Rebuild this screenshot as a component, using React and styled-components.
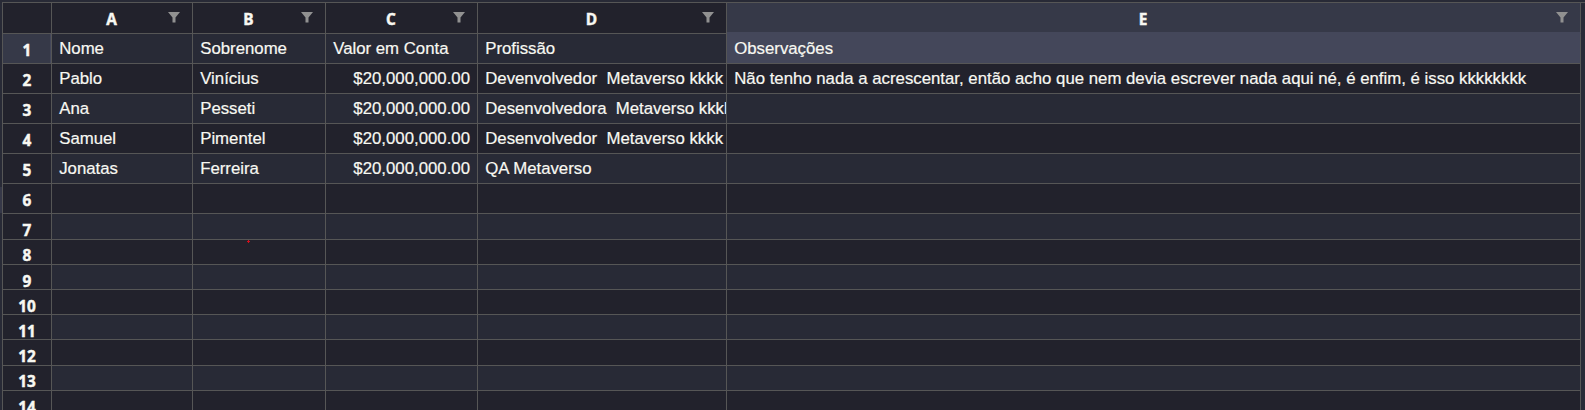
import React from "react";
import styled, { createGlobalStyle } from "styled-components";

const GlobalStyle = createGlobalStyle`
  * { box-sizing: border-box; }
  html, body { margin: 0; height: 100%; overflow: hidden; background: #282a36; }
`;

const LINE = "#565656";

const Screen = styled.div`
  position: relative;
  display: flex;
  width: 1585px;
  height: 410px;
  padding-top: 2px;
  overflow: hidden;
  background: #282a36;
  color: #f8f8f2;
`;

const LeftGutter = styled.div`
  width: 2px;
  flex: none;
  padding-top: 185px;
`;

const GutterMark = styled.div`
  height: 26px;
  background: #363848;
`;

const RightGutter = styled.div`
  flex: 1;
  border-top: 1px solid ${LINE};
`;

const Sheet = styled.div`
  flex: none;
  width: 1579px;
  border-top: 1px solid ${LINE};
  border-left: 1px solid ${LINE};
`;

const Row = styled.div`
  display: grid;
  grid-template-columns: 49px 141px 133px 152px 249px 854px;
  height: ${(p) => p.$height}px;
  background: ${(p) => (p.$shaded ? "#282a36" : "#22222c")};
`;

const Box = styled.div`
  min-width: 0;
  overflow: hidden;
  white-space: pre;
  border-right: 1px solid ${LINE};
  border-bottom: 1px solid ${LINE};
`;

const Heading = styled(Box)`
  display: flex;
  justify-content: center;
  padding: 7px 0 0 0;
  font: 700 15.4px/20px "Open Sans", "Noto Sans", sans-serif;
  -webkit-text-stroke: 0.45px currentColor;
  background: ${(p) => (p.$active ? "#363948" : "#22222c")};
  border-bottom-color: ${(p) => (p.$active ? "#44475a" : LINE)};
  box-shadow: ${(p) => (p.$active ? "inset 0 -1px #44475a" : "none")};
`;

const HeadingLabel = styled.span`
  flex: 1;
  padding-left: 3px;
  text-align: center;
`;

const FilterIcon = styled.svg`
  flex: none;
  width: 12px;
  height: 11px;
  margin: 2px 12px 0 0;
  fill: #919191;
`;

const RowNumber = styled(Box)`
  padding-top: ${(p) => p.$top}px;
  text-align: center;
  font: 700 15.4px/14px "Open Sans", "Noto Sans", sans-serif;
  -webkit-text-stroke: 0.45px currentColor;
  background: ${(p) => (p.$active ? "#363948" : "#22222c")};
  box-shadow: ${(p) => (p.$active ? "inset -1px 0 #44475a" : "none")};
`;

const Cell = styled(Box)`
  padding: 5px 7px 0 7.2px;
  text-align: ${(p) => (p.$right ? "right" : "left")};
  font: 16.8px/20px "Liberation Sans", Arial, sans-serif;
  -webkit-text-stroke: 0.2px currentColor;
  background: ${(p) => (p.$selected ? "#44475a" : "transparent")};
`;

const PointerDot = styled.svg`
  position: absolute;
  left: 247px;
  top: 240px;
  width: 3px;
  height: 3px;
`;

const columns = ["A", "B", "C", "D", "E"];

const rows = [
  { height: 30, cells: ["Nome", "Sobrenome", "Valor em Conta", "Profissão", "Observações"] },
  {
    height: 30,
    cells: [
      "Pablo",
      "Vinícius",
      "$20,000,000.00",
      "Devenvolvedor  Metaverso kkkk",
      "Não tenho nada a acrescentar, então acho que nem devia escrever nada aqui né, é enfim, é isso kkkkkkkk",
    ],
  },
  { height: 30, cells: ["Ana", "Pesseti", "$20,000,000.00", "Desenvolvedora  Metaverso kkkk", ""] },
  { height: 30, cells: ["Samuel", "Pimentel", "$20,000,000.00", "Desenvolvedor  Metaverso kkkk", ""] },
  { height: 30, cells: ["Jonatas", "Ferreira", "$20,000,000.00", "QA Metaverso", ""] },
  { height: 30 },
  { height: 26 },
  { height: 25, top: 9 },
  { height: 25 },
  { height: 25 },
  { height: 25 },
  { height: 26 },
  { height: 25, top: 9 },
  { height: 30 },
];

function Filter() {
  return (
    <FilterIcon viewBox="0 0 12 11">
      <path d="M0 0H12L7.5 5.5V10.5H4.5V5.5Z" />
    </FilterIcon>
  );
}

export default function App() {
  return (
    <>
      <GlobalStyle />
      <Screen>
        <LeftGutter>
          <GutterMark />
        </LeftGutter>
        <Sheet>
          <Row $height={31}>
            <Heading />
            {columns.map((name) => (
              <Heading key={name} $active={name === "E"}>
                <HeadingLabel>{name}</HeadingLabel>
                <Filter />
              </Heading>
            ))}
          </Row>
          {rows.map((row, i) => (
            <Row key={i} $height={row.height} $shaded={i % 2 === 0}>
              <RowNumber $active={i === 0} $top={row.top ?? 10}>
                {i + 1}
              </RowNumber>
              {columns.map((name, c) => (
                <Cell key={name} $right={c === 2 && i > 0} $selected={i === 0 && name === "E"}>
                  {row.cells?.[c]}
                </Cell>
              ))}
            </Row>
          ))}
        </Sheet>
        <RightGutter />
        <PointerDot viewBox="0 0 3 3">
          <path d="M1 0H2V1H3V2H2V3H1V2H0V1H1Z" fill="#d0101c" />
        </PointerDot>
      </Screen>
    </>
  );
}
